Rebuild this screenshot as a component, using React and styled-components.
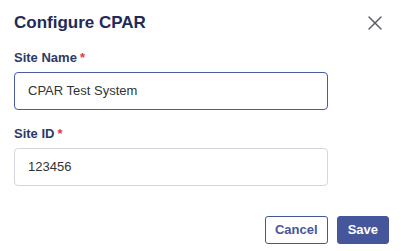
import React, { useState } from 'react';
import styled, { createGlobalStyle } from 'styled-components';
import { X } from 'lucide-react';

const GlobalStyle = createGlobalStyle`
    body{
        margin: 0;
        background: #ffffff;
        font-family: "Liberation Sans", Arial, sans-serif;
    }
`;

const Dialog = styled.div`
    width: 401px;
    height: 251px;
    box-sizing: border-box;
    padding: 13px 12px 0 14px;
    background: #ffffff;
    display: flex;
    flex-direction: column;
`;

const Header = styled.div`
    display: flex;
    align-items: center;
    justify-content: space-between;
    height: 20px;
`;

const Title = styled.h2`
    margin: 0;
    font-size: 17px;
    line-height: 20px;
    font-weight: 700;
    color: #1f2b57;
`;

const CloseButton = styled.button`
    display: flex;
    align-items: center;
    justify-content: center;
    width: 24px;
    height: 24px;
    padding: 0;
    margin-right: 2px;
    border: none;
    background: none;
    color: #5b5f68;
    cursor: pointer;
`;

const Form = styled.div`
    display: flex;
    flex-direction: column;
    gap: 16px;
    margin-top: 16.5px;
`;

const Field = styled.div`
    display: flex;
    flex-direction: column;
    gap: 7px;
`;

const Label = styled.label`
    font-size: 13px;
    line-height: 15px;
    font-weight: 700;
    color: #2b3a68;

    span{
        color: #e0393e;
        margin-left: 3px;
    }
`;

const Input = styled.input`
    width: 314px;
    height: 38px;
    box-sizing: border-box;
    padding: 0 13px;
    border: 1px solid ${(p) => (p.$active ? '#4b5ba6' : '#d3d6df')};
    border-radius: 4px;
    font-family: "Liberation Sans", Arial, sans-serif;
    font-size: 13px;
    color: #333333;
    outline: none;
`;

const Footer = styled.div`
    display: flex;
    justify-content: flex-end;
    gap: 9px;
    margin-top: 30px;
`;

const Button = styled.button`
    height: 28px;
    padding: 0 ${(p) => (p.$primary ? '10px' : '9px')};
    border-radius: 3px;
    border: 1px solid #46569b;
    background: ${(p) => (p.$primary ? '#46569b' : '#ffffff')};
    color: ${(p) => (p.$primary ? '#ffffff' : '#46569b')};
    font-family: "Liberation Sans", Arial, sans-serif;
    font-size: 13px;
    font-weight: 700;
    cursor: pointer;
`;

export default function App(){

    const [siteName, setSiteName] = useState('CPAR Test System');
    const [siteId, setSiteId] = useState('123456');

    return <>
        <GlobalStyle />
        <Dialog>
            <Header>
                <Title>Configure CPAR</Title>
                <CloseButton aria-label="Close"><X size={24} strokeWidth={1.5} /></CloseButton>
            </Header>

            <Form>
                <Field>
                    <Label>Site Name<span>*</span></Label>
                    <Input $active value={siteName} onChange={(e) => setSiteName(e.target.value)} />
                </Field>

                <Field>
                    <Label>Site ID<span>*</span></Label>
                    <Input value={siteId} onChange={(e) => setSiteId(e.target.value)} />
                </Field>
            </Form>

            <Footer>
                <Button>Cancel</Button>
                <Button $primary>Save</Button>
            </Footer>
        </Dialog>
    </>
}
